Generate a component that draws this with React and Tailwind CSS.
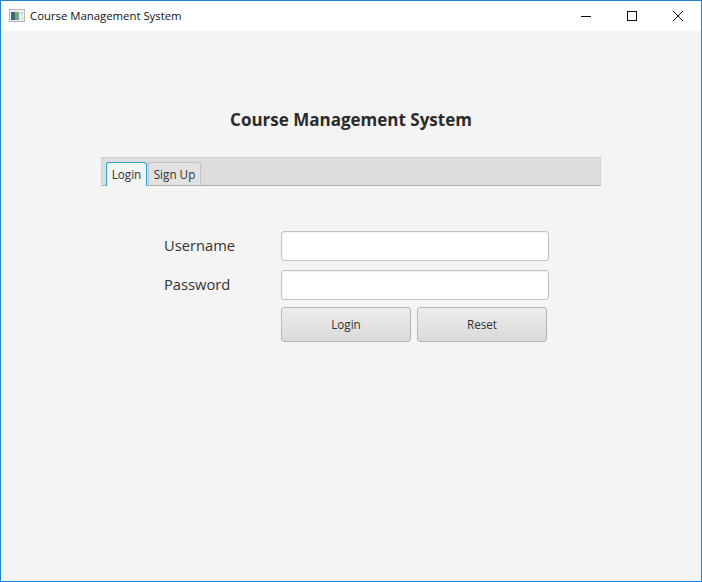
export default function App() {
  const font = "font-['Open_Sans','Noto_Sans',sans-serif]";
  return (
    <div className={`w-[702px] h-[582px] flex flex-col border border-[#1883d7] bg-[#f4f4f4] overflow-hidden ${font}`}>
      <div className="h-[30px] shrink-0 bg-white flex items-center pl-[8px]">
        <svg width="16" height="16" viewBox="0 0 16 16" className="shrink-0">
          <rect x="0.5" y="1.5" width="15" height="12" fill="#ececec" stroke="#b8b8b8" />
          <rect x="2" y="4" width="4" height="8" fill="#3d6a72" />
          <rect x="6" y="4" width="4" height="8" fill="#6fa58c" />
          <rect x="11" y="4" width="3" height="2" fill="#cfd8d8" />
          <rect x="11" y="7" width="3" height="5" fill="#e4e8e8" />
        </svg>
        <span className="ml-[5px] text-[11.35px] leading-none text-[#111]">Course Management System</span>
        <div className="ml-auto flex h-full">
          <div className="w-[46px] flex items-center justify-center">
            <svg width="10" height="10" viewBox="0 0 10 10"><path d="M0 5.5H10" stroke="#111" strokeWidth="1" /></svg>
          </div>
          <div className="w-[46px] flex items-center justify-center">
            <svg width="10" height="10" viewBox="0 0 10 10"><rect x="0.5" y="0.5" width="9" height="9" fill="none" stroke="#111" /></svg>
          </div>
          <div className="w-[46px] flex items-center justify-center">
            <svg width="10" height="10" viewBox="0 0 10 10"><path d="M0 0L10 10M10 0L0 10" stroke="#111" strokeWidth="1" /></svg>
          </div>
        </div>
      </div>

      <div className="flex-1 flex flex-col items-center">
        <h1 className="mt-[76px] h-[25px] leading-[25px] text-[17px] font-bold text-[#2b2b2b]">Course Management System</h1>

        <div className="mt-[25px] w-[500px] h-[29px] bg-[#dcdcdc] border-t border-t-[#d0d0d0] border-b border-b-[#b0b0b0] border-x border-x-[#d2d2d2] flex items-end pl-[4px] gap-[1px]">
          <div className="w-[41px] h-[24px] -mb-[1px] bg-[#f4f4f4] border border-b-0 border-[#2ba6d6] rounded-t-[3px] flex items-center justify-center text-[11.7px] text-[#333]">Login</div>
          <div className="w-[53px] h-[23px] pt-[1px] bg-[#e2e2e2] border border-b-0 border-[#c4c4c4] rounded-t-[3px] flex items-center justify-center text-[11.7px] text-[#333]">Sign Up</div>
        </div>

        <div className="mt-[45px] w-full pl-[163px] flex flex-col">
          <div className="flex items-center h-[30px]">
            <label className="w-[117px] text-[14.7px] leading-[26px] pb-[2px] text-[#333]">Username</label>
            <input className="w-[268px] h-[30px] bg-white border border-[#c2c2c2] rounded-[3px] shadow-[inset_0_1px_2px_rgba(0,0,0,0.06)] outline-none" />
          </div>
          <div className="flex items-center h-[30px] mt-[9px]">
            <label className="w-[117px] text-[14.7px] leading-[26px] pb-[2px] text-[#333]">Password</label>
            <input type="password" className="w-[268px] h-[30px] bg-white border border-[#c2c2c2] rounded-[3px] shadow-[inset_0_1px_2px_rgba(0,0,0,0.06)] outline-none" />
          </div>
          <div className="flex ml-[117px] mt-[7px] gap-[6px]">
            <button className="w-[130px] h-[35px] rounded-[3px] border border-[#b5b5b5] bg-gradient-to-b from-[#eeeeee] to-[#d9d9d9] text-[11.7px] text-[#333]">Login</button>
            <button className="w-[130px] h-[35px] rounded-[3px] border border-[#b5b5b5] bg-gradient-to-b from-[#eeeeee] to-[#d9d9d9] text-[11.7px] text-[#333]">Reset</button>
          </div>
        </div>
      </div>
    </div>
  );
}
